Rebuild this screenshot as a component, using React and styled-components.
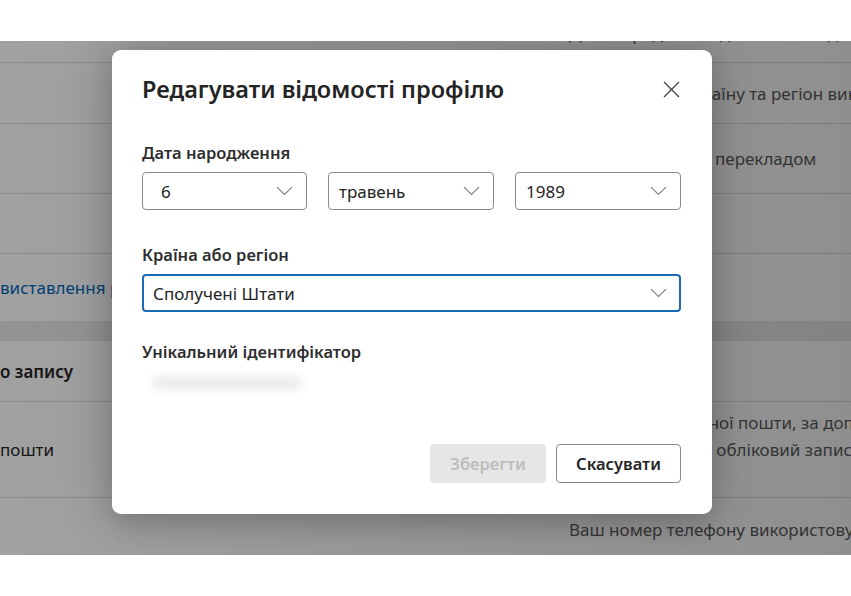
import React from 'react'
import styled, { createGlobalStyle } from 'styled-components'

const GlobalStyle = createGlobalStyle`
  html, body { margin: 0; padding: 0; background: #fff; }
  body { font-family: "Noto Sans", "Open Sans", sans-serif; color: #242424; }
  * { box-sizing: border-box; }
`

const Screen = styled.div`
  width: 851px;
  height: 596px;
  padding-top: 41px;
  background: #fff;
  overflow: hidden;
`

const Backdrop = styled.div`
  position: relative;
  height: 514px;
  overflow: hidden;
  background: #e9e9e9;
`

const Scrim = styled.div`
  position: absolute;
  inset: 0;
  background: linear-gradient(90deg, rgba(0,0,0,0.37) 0%, rgba(0,0,0,0.44) 100%);
`

const Card = styled.div`
  background: #fff;
  margin-top: ${({ $gap }) => $gap}px;
`

const Row = styled.div`
  display: grid;
  grid-template-columns: 569px 1fr;
  align-items: center;
  height: ${({ $h }) => $h}px;
  border-bottom: ${({ $last }) => ($last ? 'none' : '1px solid #dcdcdc')};
`

const LeftText = styled.div`
  white-space: nowrap;
  font-size: 17px;
  font-weight: ${({ $bold }) => ($bold ? 600 : 400)};
  color: ${({ $link }) => ($link ? '#0067b8' : '#242424')};
`

const RightText = styled.div`
  white-space: nowrap;
  font-size: 17px;
  line-height: 27px;
  color: #5c5c5c;
`

const Dialog = styled.div`
  position: absolute;
  left: 112px;
  top: 9px;
  width: 600px;
  height: 464px;
  background: #fff;
  border-radius: 9px;
  box-shadow: 0 0 50px rgba(0,0,0,0.22), 0 10px 24px rgba(0,0,0,0.12);
  padding: 23px 31px 31px 30px;
  display: flex;
  flex-direction: column;
`

const Header = styled.div`
  display: flex;
  align-items: center;
  justify-content: space-between;
  height: 32px;
`

const Title = styled.h2`
  margin: 0;
  font-size: 23.5px;
  font-weight: 600;
  line-height: 32px;
  color: #242424;
`

const CloseButton = styled.button`
  border: none;
  background: none;
  padding: 0;
  margin-right: 1px;
  width: 18px;
  height: 18px;
  display: flex;
  align-items: center;
  justify-content: center;
  color: #424242;
`

const Label = styled.div`
  font-size: 16.5px;
  font-weight: 600;
  line-height: 22px;
  color: #2e2e2e;
  margin-top: ${({ $top }) => $top}px;
  margin-bottom: 8px;
`

const SelectRow = styled.div`
  display: grid;
  grid-template-columns: 165px 166px 166px;
  column-gap: 21px;
`

const Select = styled.div`
  height: 38px;
  display: flex;
  align-items: center;
  justify-content: space-between;
  padding: 0 ${({ $focus }) => ($focus ? '12px 0 9px' : '13px 0 10px')};
  border: ${({ $focus }) => ($focus ? '2px solid #1b6ab8' : '1px solid #8a8a8a')};
  border-radius: 4px;
  font-size: 17px;
  color: #242424;
`

const SelectValue = styled.span`
  padding-left: ${({ $pad }) => $pad || 0}px;
`

const Hidden = styled.div`
  margin-top: 5px;
  margin-left: 10px;
  width: 150px;
  height: 14px;
  border-radius: 7px;
  background: #ececec;
  filter: blur(4px);
`

const Footer = styled.div`
  margin-top: auto;
  display: flex;
  justify-content: flex-end;
  gap: 10px;
`

const Button = styled.button`
  height: 39px;
  width: ${({ $w }) => $w}px;
  border-radius: 4px;
  font-family: inherit;
  font-size: 16.5px;
  font-weight: 600;
  border: ${({ $disabled }) => ($disabled ? 'none' : '1px solid #8a8a8a')};
  background: ${({ $disabled }) => ($disabled ? '#e6e6e6' : '#fff')};
  color: ${({ $disabled }) => ($disabled ? '#bdbdbd' : '#242424')};
`

const Chevron = () => (
  <svg width="17" height="10" viewBox="0 0 17 10" fill="none">
    <path d="M1 1.2 L8.5 8.5 L16 1.2" stroke="#7d7d7d" strokeWidth="1.1" />
  </svg>
)

const CloseIcon = () => (
  <svg width="17" height="17" viewBox="0 0 17 17" fill="none">
    <path d="M1 1 L16 16 M16 1 L1 16" stroke="currentColor" strokeWidth="1.3" />
  </svg>
)

export default function App() {
  return (
    <Screen>
      <GlobalStyle />
      <Backdrop>
        <Card $gap={-37}>
          <Row $h={59}>
            <LeftText />
            <RightText>Дата народження допомагає підібрати вміст для вашого віку</RightText>
          </Row>
          <Row $h={61}>
            <LeftText />
            <RightText>Виберіть свою країну та регіон використання облікового запису</RightText>
          </Row>
          <Row $h={70}>
            <LeftText />
            <RightText>Показати вміст із перекладом</RightText>
          </Row>
          <Row $h={60}>
            <LeftText />
            <RightText />
          </Row>
          <Row $h={67} $last>
            <LeftText $link>виставлення рахунків і доставки</LeftText>
            <RightText />
          </Row>
        </Card>
        <Card $gap={20}>
          <Row $h={61}>
            <LeftText $bold>о запису</LeftText>
            <RightText />
          </Row>
          <Row $h={96}>
            <LeftText>пошти</LeftText>
            <RightText>
              <div>Адреса електронної пошти, за допомогою якої ви входите</div>
              <div>щоб увійти в свій обліковий запис</div>
              <div>Microsoft.</div>
            </RightText>
          </Row>
          <Row $h={64}>
            <LeftText />
            <RightText>Ваш номер телефону використовується для входу</RightText>
          </Row>
        </Card>
        <Scrim />
        <Dialog>
          <Header>
            <Title>Редагувати відомості профілю</Title>
            <CloseButton aria-label="Закрити">
              <CloseIcon />
            </CloseButton>
          </Header>
          <Label $top={37}>Дата народження</Label>
          <SelectRow>
            <Select>
              <SelectValue $pad={8}>6</SelectValue>
              <Chevron />
            </Select>
            <Select>
              <SelectValue>травень</SelectValue>
              <Chevron />
            </Select>
            <Select>
              <SelectValue>1989</SelectValue>
              <Chevron />
            </Select>
          </SelectRow>
          <Label $top={34}>Країна або регіон</Label>
          <Select $focus>
            <SelectValue>Сполучені Штати</SelectValue>
            <Chevron />
          </Select>
          <Label $top={29}>Унікальний ідентифікатор</Label>
          <Hidden />
          <Footer>
            <Button $w={116} $disabled>Зберегти</Button>
            <Button $w={125}>Скасувати</Button>
          </Footer>
        </Dialog>
      </Backdrop>
    </Screen>
  )
}
